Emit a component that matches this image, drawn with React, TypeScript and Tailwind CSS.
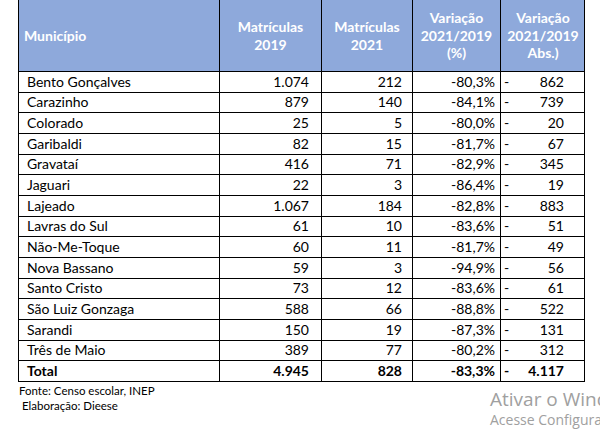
import React from "react";

type Row = { m: string; a: string; b: string; p: string; d: string; bold?: boolean };

const rows: Row[] = [
  { m: "Bento Gonçalves", a: "1.074", b: "212", p: "-80,3%", d: "862" },
  { m: "Carazinho", a: "879", b: "140", p: "-84,1%", d: "739" },
  { m: "Colorado", a: "25", b: "5", p: "-80,0%", d: "20" },
  { m: "Garibaldi", a: "82", b: "15", p: "-81,7%", d: "67" },
  { m: "Gravataí", a: "416", b: "71", p: "-82,9%", d: "345" },
  { m: "Jaguari", a: "22", b: "3", p: "-86,4%", d: "19" },
  { m: "Lajeado", a: "1.067", b: "184", p: "-82,8%", d: "883" },
  { m: "Lavras do Sul", a: "61", b: "10", p: "-83,6%", d: "51" },
  { m: "Não-Me-Toque", a: "60", b: "11", p: "-81,7%", d: "49" },
  { m: "Nova Bassano", a: "59", b: "3", p: "-94,9%", d: "56" },
  { m: "Santo Cristo", a: "73", b: "12", p: "-83,6%", d: "61" },
  { m: "São Luiz Gonzaga", a: "588", b: "66", p: "-88,8%", d: "522" },
  { m: "Sarandi", a: "150", b: "19", p: "-87,3%", d: "131" },
  { m: "Três de Maio", a: "389", b: "77", p: "-80,2%", d: "312" },
  { m: "Total", a: "4.945", b: "828", p: "-83,3%", d: "4.117", bold: true },
];

const font = { fontFamily: "Lato, 'Open Sans', sans-serif" };

export default function App() {
  return (
    <div className="relative w-[600px] h-[429px] bg-white overflow-hidden text-black" style={font}>
      <div className="ml-[18px] w-[567px] border-l border-r border-black">
        <div className="grid grid-cols-[201px_102px_91px_88px_84px] h-[72px] bg-[#8EA9DB] border-b border-black text-white font-bold text-[14px] leading-[17.5px]">
          <div className="border-r border-black flex items-center pl-[5px]">Município</div>
          <div className="border-r border-black flex items-center justify-center text-center">
            Matrículas<br />2019
          </div>
          <div className="border-r border-black flex items-center justify-center text-center">
            Matrículas<br />2021
          </div>
          <div className="border-r border-black flex items-center justify-center text-center">
            Variação<br />2021/2019<br />(%)
          </div>
          <div className="flex items-center justify-center text-center">
            Variação<br />2021/2019<br />Abs.)
          </div>
        </div>
        {rows.map((r) => (
          <div
            key={r.m}
            className={`grid grid-cols-[201px_102px_91px_88px_84px] h-[20.67px] border-b border-black text-[14px] leading-none ${r.bold ? "font-bold" : ""}`}
          >
            <div className="border-r border-black flex items-center pl-[8px]">{r.m}</div>
            <div className="border-r border-black flex items-center justify-end pr-[12px]">{r.a}</div>
            <div className="border-r border-black flex items-center justify-end pr-[10px]">{r.b}</div>
            <div className="border-r border-black flex items-center justify-end pr-[5px]">{r.p}</div>
            <div className="flex items-center justify-between pl-[3px] pr-[21px]">
              <span>-</span>
              <span>{r.d}</span>
            </div>
          </div>
        ))}
      </div>
      <div className="pl-[19px] pt-[1px] text-[11.5px] leading-[15px]">Fonte: Censo escolar, INEP</div>
      <div className="pl-[22px] text-[11.5px] leading-[15px]">Elaboração: Dieese</div>
      <div
        className="absolute left-[490px] top-[387px] whitespace-nowrap text-[#a0a0a0]"
        style={{ fontFamily: "'Open Sans', 'Noto Sans', sans-serif" }}
      >
        <div className="text-[19px] leading-[24px]">Ativar o Windows</div>
        <div className="text-[14px] leading-[18px]">Acesse Configurações para ativar o Windows.</div>
      </div>
    </div>
  );
}
